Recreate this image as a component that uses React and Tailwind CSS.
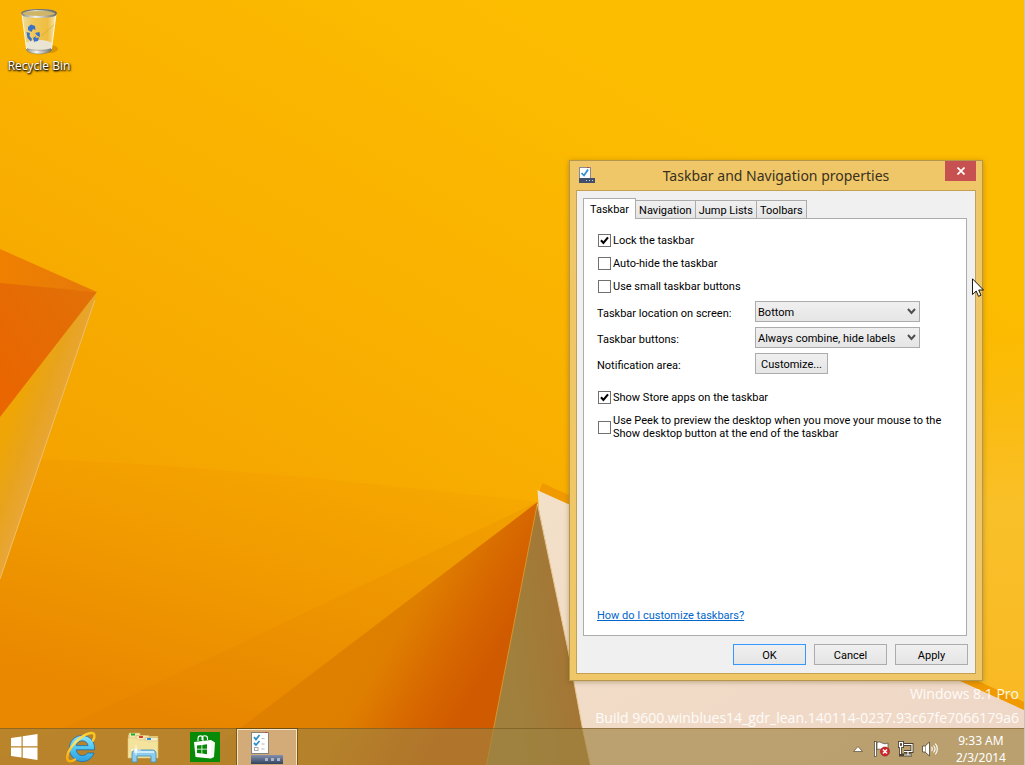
import React, { useState } from 'react';
import clsx from 'clsx';

const TABS = ['Taskbar', 'Navigation', 'Jump Lists', 'Toolbars'];

function Wallpaper() {
  return (
    <svg
      className="absolute inset-0 h-full w-full"
      viewBox="0 0 1025 765"
      preserveAspectRatio="none"
      aria-hidden="true"
    >
      <defs>
        <linearGradient id="sky" gradientUnits="userSpaceOnUse" x1="150" y1="600" x2="500" y2="0">
          <stop offset="0" stopColor="#f3a000" />
          <stop offset="0.5" stopColor="#f9b000" />
          <stop offset="1" stopColor="#fcbc00" />
        </linearGradient>
        <linearGradient id="rightSide" gradientUnits="userSpaceOnUse" x1="0" y1="330" x2="0" y2="690">
          <stop offset="0" stopColor="#f9be20" stopOpacity="0" />
          <stop offset="0.5" stopColor="#f9c02a" />
          <stop offset="1" stopColor="#f8b924" />
        </linearGradient>
        <linearGradient id="flapTop" x1="0" y1="0" x2="1" y2="0">
          <stop offset="0" stopColor="#ef8000" />
          <stop offset="1" stopColor="#e67a0a" />
        </linearGradient>
        <linearGradient id="flapLow" x1="0.9" y1="0" x2="0.1" y2="0.8">
          <stop offset="0" stopColor="#e27008" />
          <stop offset="1" stopColor="#e96600" />
        </linearGradient>
        <linearGradient id="fold" gradientUnits="userSpaceOnUse" x1="10" y1="420" x2="64" y2="440">
          <stop offset="0" stopColor="#eea505" />
          <stop offset="0.4" stopColor="#e8a31c" />
          <stop offset="1" stopColor="#e8a848" />
        </linearGradient>
        <linearGradient id="lower" gradientUnits="userSpaceOnUse" x1="330" y1="450" x2="240" y2="740">
          <stop offset="0" stopColor="#f6a700" />
          <stop offset="0.5" stopColor="#f09900" />
          <stop offset="1" stopColor="#ea8800" />
        </linearGradient>
        <linearGradient id="ray" gradientUnits="userSpaceOnUse" x1="350" y1="630" x2="470" y2="700">
          <stop offset="0" stopColor="#e08000" />
          <stop offset="0.3" stopColor="#df7f00" />
          <stop offset="0.7" stopColor="#d76700" />
          <stop offset="1" stopColor="#d05a00" />
        </linearGradient>
        <linearGradient id="olive" gradientUnits="userSpaceOnUse" x1="510" y1="650" x2="580" y2="640">
          <stop offset="0" stopColor="#a0803c" />
          <stop offset="1" stopColor="#a57434" />
        </linearGradient>
        <linearGradient id="cream" x1="0" y1="0" x2="1" y2="1">
          <stop offset="0" stopColor="#f3e0c8" />
          <stop offset="1" stopColor="#eed6c6" />
        </linearGradient>
      </defs>
      <rect width="1025" height="765" fill="url(#sky)" />
      <rect x="700" y="330" width="325" height="380" fill="url(#rightSide)" />
      <path d="M0 458 C 160 462 330 478 538 502 L490 765 L0 765 Z" fill="url(#lower)" />
      <path d="M538 502 L0 758 L0 765 L490 765 Z" fill="#e07800" opacity="0.15" />
      <path d="M538 502 L192 765 L490 765 Z" fill="url(#ray)" />
      <path d="M0 416 L96 292 L94 305 L0 580 Z" fill="url(#fold)" />
      <path d="M95 300 L0 579" stroke="#f3c877" strokeWidth="1" fill="none" opacity="0.7" />
      <path d="M0 249 L97 292 L0 284 Z" fill="url(#flapTop)" />
      <path d="M0 283 L97 292 L0 417 Z" fill="url(#flapLow)" />
      <path d="M538 490 L1025 708 L1025 765 L560 765 Z" fill="url(#cream)" />
      <path d="M543 483 L1025 702 L1025 710 L540 491 Z" fill="#f09a00" />
      <path d="M538 503 L487 765 L591 765 L583 728 L569 652 Z" fill="url(#olive)" />
      <path d="M538 503 L487 765" stroke="#d9952c" strokeWidth="1" fill="none" />
      <path d="M538 504 L569 652 L583 728 L591 765" stroke="#e9c792" strokeWidth="1" fill="none" />
    </svg>
  );
}

function RecycleBinIcon() {
  return (
    <svg className="h-12 w-12" viewBox="0 0 48 48" aria-hidden="true">
      <defs>
        <linearGradient id="glass" x1="0" x2="1">
          <stop offset="0" stopColor="#e8dfae" stopOpacity="0.95" />
          <stop offset="0.35" stopColor="#eecb6c" stopOpacity="0.8" />
          <stop offset="0.75" stopColor="#edbf4c" stopOpacity="0.85" />
          <stop offset="1" stopColor="#f6ecc4" stopOpacity="0.95" />
        </linearGradient>
        <linearGradient id="chrome" x1="0" x2="1">
          <stop offset="0" stopColor="#8c8c84" />
          <stop offset="0.4" stopColor="#f4f4f0" />
          <stop offset="0.7" stopColor="#b0b0aa" />
          <stop offset="1" stopColor="#6f6f68" />
        </linearGradient>
      </defs>
      <ellipse cx="35" cy="41" rx="8" ry="4" fill="#b87800" opacity="0.5" />
      <path d="M7 6 L12 42 C16 46 32 46 36 42 L41 6 Z" fill="url(#glass)" />
      <path d="M11 35 C16 31 32 31 37 35 L36 42 C32 45 16 45 12 42 Z" fill="#e9e9e2" opacity="0.9" />
      <path d="M26 28 L40 16" stroke="#d5a32c" strokeWidth="1" opacity="0.6" />
      <path d="M11 40 C16 43 32 43 37 40 L36 43 C31 47 17 47 12 43 Z" fill="url(#chrome)" stroke="#66665f" strokeWidth="0.400" />
      <path d="M7 6 L11.500 41 M41 6 L36.500 41" stroke="#fffbe6" strokeWidth="1" fill="none" />
      <ellipse cx="24" cy="5.500" rx="17" ry="3.500" fill="#d0b566" stroke="url(#chrome)" strokeWidth="1.800" />
      <path d="M6.500 5 C9 0.500 39 0.500 41.500 5" stroke="#66665c" strokeWidth="1" fill="none" />
      <g fill="#3972c8">
        <path d="M13 19 L16 16.500 L20 18 L20.500 22 L18 21 L16.500 24 L13 22 Z" />
        <path d="M11.500 24 L15 25 L14.500 28 L17 31 L16 33.500 L12.500 30 Z" />
        <path d="M18 30 L21 28 L20.500 30 L24 29.500 L23 33 L20 33.500 L19.500 34.500 Z" />
        <path d="M20 25 L24.500 24 L25 29 L22 27.500 Z" />
      </g>
    </svg>
  );
}

function WindowsLogo() {
  return (
    <svg className="h-[26px] w-[27px]" viewBox="0 0 27 26" fill="#fff" aria-hidden="true">
      <path d="M0 4 L10.500 2.500 V12.300 H0 Z" />
      <path d="M11.700 2.300 L26.500 0 V12.300 H11.700 Z" />
      <path d="M0 13.500 H10.500 V23.500 L0 22 Z" />
      <path d="M11.700 13.500 H26.500 V26 L11.700 23.700 Z" />
    </svg>
  );
}

function InternetExplorerIcon() {
  return (
    <svg className="h-8 w-8" viewBox="0 0 32 32" aria-hidden="true">
      <defs>
        <linearGradient id="ieBlue" x1="0" y1="0" x2="0" y2="1">
          <stop offset="0" stopColor="#8fe6fb" />
          <stop offset="0.5" stopColor="#4fc5f2" />
          <stop offset="1" stopColor="#2f9fe0" />
        </linearGradient>
        <linearGradient id="ieRing" x1="0" y1="1" x2="1" y2="0">
          <stop offset="0" stopColor="#f6a800" />
          <stop offset="0.5" stopColor="#ffe66b" />
          <stop offset="1" stopColor="#f9c21b" />
        </linearGradient>
      </defs>
      <path
        d="M29.500 18.800 H11.200 C11.500 22.200 14 24.600 17.300 24.600 C19.500 24.600 21.300 23.600 22.300 22 H29 C27.200 27.200 22.800 30.600 17.300 30.600 C10 30.600 4.300 24.800 4.300 17.500 C4.300 10.200 10 4.500 17.300 4.500 C24.500 4.500 30.300 10.300 29.500 18.800 Z M11.300 14.600 H23 C22.600 11.800 20.300 9.800 17.200 9.800 C14.100 9.800 11.800 11.800 11.300 14.600 Z"
        fill="url(#ieBlue)"
        stroke="#1c6fae"
        strokeWidth="0.800"
      />
      <path
        d="M28 9.500 C30.500 5 30 1.700 26 2 C20 2.600 11 9 6 16.500 C1.500 23 0.800 29.500 4.500 30.200 C6.200 30.600 8 29.800 10 28.500"
        fill="none"
        stroke="url(#ieRing)"
        strokeWidth="2.400"
        strokeLinecap="round"
      />
    </svg>
  );
}

function ExplorerIcon() {
  return (
    <svg className="h-8 w-8" viewBox="0 0 32 32" aria-hidden="true">
      <path d="M1 4 H2 V2 H13 V4 H19 V5 H31 V27 H1 Z" fill="#e2c878" />
      <path d="M2 2 H13 V8 H2 Z" fill="#f4e6b0" stroke="#d0b460" strokeWidth="0.600" />
      <path d="M9 4.500 H22 V10 H9 Z" fill="#f4e6b0" stroke="#d0b460" strokeWidth="0.600" />
      <path d="M18 6.500 H31 V12 H18 Z" fill="#f7edc4" stroke="#d0b460" strokeWidth="0.600" />
      <rect x="4" y="2.500" width="4" height="2" fill="#16b02c" />
      <rect x="12" y="5" width="4" height="2" fill="#d8402c" />
      <rect x="20" y="7" width="4" height="2" fill="#2e8de0" />
      <path d="M1 7 H9 L11 9 H18 L20 10 H31 V27 H1 Z" fill="#f4e39c" stroke="#dcc47a" strokeWidth="0.600" />
      <path
        d="M5 31 V23 C5 20 6.500 19 9 19 H25 C27.500 19 29 20 29 23 V31 H24 V25 H10 V31 Z"
        fill="#8ccdec"
        stroke="#4a94bf"
        strokeWidth="0.900"
      />
      <path d="M7 21 H27" stroke="#dff4fd" strokeWidth="1.600" />
      <path d="M9 14 V24 M4 19 H14" stroke="#fff" strokeWidth="0.900" opacity="0.9" />
      <circle cx="9" cy="19" r="1.600" fill="#fff" />
    </svg>
  );
}

function StoreIcon() {
  return (
    <svg className="h-[30px] w-[30px]" viewBox="0 0 30 30" aria-hidden="true">
      <rect width="30" height="30" fill="#078a07" />
      <path d="M8 9 V6.500 C8 3 13 3 13 6.500 V9 M12 8 V6 C12 3 17.500 3 17.500 6 V8" fill="none" stroke="#fff" strokeWidth="1.100" />
      <path d="M4 10 L21 8 L21 26.500 L5.500 25 Z" fill="#fff" />
      <path d="M21 8 L25 10.500 L24 25 L21 26.500 Z" fill="#f2faf2" />
      <g fill="#078a07">
        <path d="M7 13.500 L11.500 13 V16.700 H7 Z" />
        <path d="M12.300 12.900 L17 12.200 V16.700 H12.300 Z" />
        <path d="M7 17.500 H11.500 V21.500 L7 21 Z" />
        <path d="M12.300 17.500 H17 V22.200 L12.300 21.600 Z" />
      </g>
    </svg>
  );
}

function TaskbarSettingsIcon() {
  return (
    <svg className="h-8 w-8" viewBox="0 0 32 32" aria-hidden="true">
      <defs>
        <linearGradient id="barBlue" x1="0" y1="0" x2="0" y2="1">
          <stop offset="0" stopColor="#8290ac" />
          <stop offset="1" stopColor="#33425f" />
        </linearGradient>
      </defs>
      <rect x="0.500" y="0.500" width="17" height="21" fill="#fdfdfd" stroke="#85827c" />
      <rect x="14" y="0" width="2" height="1" fill="#d33" />
      <path d="M3 5 L5 7.500 L8.500 3 M3 11 L5 13 L8.500 9" stroke="#2d8fc9" strokeWidth="1.800" fill="none" />
      <path d="M10.500 6.500 H13.500 M10.500 12 H13.500 M10.500 17 H13.500" stroke="#bbb" strokeWidth="1" />
      <rect x="3.500" y="15.500" width="3.500" height="3" fill="none" stroke="#aaa" />
      <rect x="0" y="23" width="32" height="9" fill="url(#barBlue)" />
      <rect x="14" y="26" width="3" height="3" fill="#aab6c8" />
      <rect x="20" y="26" width="3" height="3" fill="#aab6c8" />
      <rect x="26" y="26" width="3" height="3" fill="#aab6c8" />
    </svg>
  );
}

function DialogIcon() {
  return (
    <svg className="h-4 w-4" viewBox="0 0 16 16" aria-hidden="true">
      <rect x="0.500" y="0.500" width="11" height="11" fill="#fff" stroke="#8a8a90" />
      <rect x="8" y="0" width="2" height="1" fill="#d33" />
      <path d="M2.500 6 L5 8.500 L9 2.500" stroke="#2a8fcc" strokeWidth="1.700" fill="none" />
      <rect x="0" y="11" width="16" height="5" fill="#43506b" />
      <rect x="7" y="13" width="1" height="1" fill="#c8d2e2" />
      <rect x="10" y="13" width="1" height="1" fill="#c8d2e2" />
      <rect x="13" y="13" width="1" height="1" fill="#c8d2e2" />
    </svg>
  );
}

function FlagIcon() {
  return (
    <svg className="h-4 w-4" viewBox="0 0 16 16" aria-hidden="true">
      <rect x="0.500" y="0.500" width="2" height="15" fill="#fff" stroke="#4c4231" strokeWidth="0.700" />
      <path d="M3 1.500 C5 0.500 7 1 8 2 C10 3 12 3 14 2 V9 C11 10 9 9.500 7.500 8.500 C6 8 4.500 8 3 8.500 Z" fill="#fff" stroke="#4c4231" strokeWidth="0.700" />
      <circle cx="11" cy="10.500" r="4.500" fill="#d8252c" stroke="#8e1a1d" strokeWidth="0.600" />
      <path d="M9 8.500 L13 12.500 M13 8.500 L9 12.500" stroke="#fff" strokeWidth="1.500" />
    </svg>
  );
}

function NetworkIcon() {
  return (
    <svg className="h-4 w-4" viewBox="0 0 16 16" fill="none" aria-hidden="true">
      <g stroke="#4c4231" strokeWidth="3">
        <path d="M6 3.500 H14 V10.500 H6 M10 11 V14 M5 14 H14 M2.500 6 V14 H5" />
        <rect x="1.500" y="1.500" width="3" height="4" />
      </g>
      <g stroke="#fff" strokeWidth="1.200">
        <path d="M6 3.500 H14 V10.500 H6 M10 11 V14 M6 14 H13.500 M2.500 6 V13" />
        <rect x="1.500" y="1.500" width="3" height="4" />
      </g>
    </svg>
  );
}

function SpeakerIcon() {
  return (
    <svg className="h-4 w-4" viewBox="0 0 16 16" fill="none" aria-hidden="true">
      <path d="M0.500 5 H3 L7.500 1 V15 L3 11 H0.500 Z" fill="#fff" stroke="#4c4231" strokeWidth="0.800" />
      <path d="M3.500 5 V11" stroke="#8f7f5e" strokeWidth="0.700" />
      <path d="M9.500 6 C10.500 7 10.500 9 9.500 10 M11.500 4.500 C13.300 6.500 13.300 9.500 11.500 11.500 M13.300 2.700 C16 5.500 16 10.500 13.300 13.300" stroke="#fff" strokeWidth="1.100" />
    </svg>
  );
}

function CheckField({ id, label, checked, onChange }) {
  return (
    <div className="flex items-center gap-[2px] py-[5px] pl-px">
      <span className="relative flex shrink-0">
        <input
          id={id}
          type="checkbox"
          checked={checked}
          onChange={onChange}
          className="peer h-[13px] w-[13px] appearance-none border border-[#707070] bg-white"
        />
        <svg
          className="pointer-events-none absolute inset-0 hidden h-[13px] w-[13px] peer-checked:block"
          viewBox="0 0 13 13"
          aria-hidden="true"
        >
          <path d="M3 6.300 L5.400 9 L10 3.300" stroke="#000" strokeWidth="2.100" fill="none" />
        </svg>
      </span>
      <label htmlFor={id}>{label}</label>
    </div>
  );
}

function SelectField({ id, label, options }) {
  return (
    <div className="flex items-center">
      <label htmlFor={id} className="w-[158px] pt-[3px]">
        {label}
      </label>
      <div className="relative w-[165px]">
        <select
          id={id}
          className="block h-[21px] w-full appearance-none border border-[#acacac] bg-linear-to-b from-[#f0f0f0] to-[#e5e5e5] pl-[2px] pt-px"
        >
          {options.map((option) => (
            <option key={option}>{option}</option>
          ))}
        </select>
        <svg
          className="pointer-events-none absolute right-1 top-[6px] h-[9px] w-[9px]"
          viewBox="0 0 9 9"
          aria-hidden="true"
        >
          <path d="M1 2 L4.500 6 L8 2" stroke="#505050" strokeWidth="2" fill="none" />
        </svg>
      </div>
    </div>
  );
}

function PushButton({ children, primary }) {
  return (
    <button
      type="button"
      className={clsx(
        'h-[21px] w-[73px] border bg-linear-to-b from-[#f0f0f0] to-[#e5e5e5] pt-px text-center',
        primary ? 'border-[#3399ff]' : 'border-[#acacac]'
      )}
    >
      {children}
    </button>
  );
}

function PropertiesDialog() {
  const [activeTab, setActiveTab] = useState('Taskbar');
  const [settings, setSettings] = useState({
    lock: true,
    autoHide: false,
    smallButtons: false,
    storeApps: true,
    peek: false,
  });

  const toggle = (key) => () => setSettings((prev) => ({ ...prev, [key]: !prev[key] }));

  return (
    <section
      aria-label="Taskbar and Navigation properties"
      className="absolute left-[569px] top-[160px] w-[414px] border border-[#b6964a] bg-[#efc768] px-[6px] pb-[6px] shadow-[0_1px_5px_rgba(90,60,0,0.35)]"
    >
      <header className="flex h-[29px] items-start">
        <div className="pl-[3px] pt-[6px]">
          <DialogIcon />
        </div>
        <h1 className="flex-1 pl-3 text-center font-['Noto_Sans','Open_Sans',sans-serif] text-[14px] leading-[29px] text-[#3a3020]">
          Taskbar and Navigation properties
        </h1>
        <button type="button" aria-label="Close" className="flex h-5 w-[31px] items-center justify-center bg-[#c75050]">
          <svg className="h-2 w-2" viewBox="0 0 8 8" aria-hidden="true">
            <path d="M0.500 0.500 L7.500 7.500 M7.500 0.500 L0.500 7.500" stroke="#fff" strokeWidth="1.700" />
          </svg>
        </button>
      </header>

      <div className="border border-[#c3a052] bg-[#f0f0f0] pb-[8px] pl-[6px] pr-[7px] pt-[7px] font-[Roboto,'Noto_Sans',sans-serif] text-[11px] leading-[13px] text-black">
        <div role="tablist" className="flex items-end">
          {TABS.map((tab) => (
            <button
              key={tab}
              type="button"
              role="tab"
              aria-selected={activeTab === tab}
              onClick={() => setActiveTab(tab)}
              className={clsx(
                'border border-b-0 border-[#acacac] text-center',
                activeTab === tab
                  ? 'relative -mb-px h-[21px] bg-white px-[6px]'
                  : 'h-[18px] border-l-0 bg-linear-to-b from-[#f0f0f0] to-[#e5e5e5] px-[3px] pt-px'
              )}
            >
              {tab}
            </button>
          ))}
        </div>

        <div role="tabpanel" className="mr-px border border-[#acacac] bg-white px-[13px] pb-[13px] pt-[10px]">
          <CheckField id="lock" label="Lock the taskbar" checked={settings.lock} onChange={toggle('lock')} />
          <CheckField id="auto-hide" label="Auto-hide the taskbar" checked={settings.autoHide} onChange={toggle('autoHide')} />
          <CheckField
            id="small-buttons"
            label="Use small taskbar buttons"
            checked={settings.smallButtons}
            onChange={toggle('smallButtons')}
          />
          <div className="mb-3 mt-[3px] space-y-[5px]">
            <SelectField id="location" label="Taskbar location on screen:" options={['Bottom', 'Left', 'Right', 'Top']} />
            <SelectField
              id="combine"
              label="Taskbar buttons:"
              options={['Always combine, hide labels', 'Combine when taskbar is full', 'Never combine']}
            />
            <div className="flex items-center">
              <span className="w-[158px] pt-[3px]">Notification area:</span>
              <PushButton>Customize...</PushButton>
            </div>
          </div>
          <CheckField
            id="store-apps"
            label="Show Store apps on the taskbar"
            checked={settings.storeApps}
            onChange={toggle('storeApps')}
          />
          <CheckField
            id="peek"
            label="Use Peek to preview the desktop when you move your mouse to the Show desktop button at the end of the taskbar"
            checked={settings.peek}
            onChange={toggle('peek')}
          />
          <div className="pt-[164px]">
            <a href="#help" className="block text-[#0066cc] underline">
              How do I customize taskbars?
            </a>
          </div>
        </div>

        <footer className="flex justify-end gap-2 pt-[8px]">
          <PushButton primary>OK</PushButton>
          <PushButton>Cancel</PushButton>
          <PushButton>Apply</PushButton>
        </footer>
      </div>
    </section>
  );
}

function Cursor() {
  return (
    <svg className="pointer-events-none absolute left-[972px] top-[278px] h-[19px] w-3" viewBox="0 0 12 19" aria-hidden="true">
      <path
        d="M0.500 0.800 V16.500 L4.200 13 L6.500 18.300 L9 17.200 L6.700 12 H11.500 Z"
        fill="#fff"
        stroke="#000"
        strokeWidth="0.900"
      />
    </svg>
  );
}

function TaskButton({ label, active, children }) {
  return (
    <button
      type="button"
      aria-label={label}
      className={clsx(
        'flex w-[60px] items-center justify-center',
        active && 'border border-b-0 border-[#f5e6c6] bg-[#d9b58c]/80 shadow-[0_0_0_1px_rgba(90,60,10,0.6)]'
      )}
    >
      {children}
    </button>
  );
}

function Taskbar() {
  return (
    <nav className="relative flex h-[37px] items-stretch justify-between border-t border-[#6b4c14]/50 bg-[#9e8241]/65">
      <div className="flex items-stretch gap-[2px]">
        <button type="button" aria-label="Start" className="flex w-[49px] items-center justify-center">
          <WindowsLogo />
        </button>
        <TaskButton label="Internet Explorer">
          <InternetExplorerIcon />
        </TaskButton>
        <TaskButton label="File Explorer">
          <ExplorerIcon />
        </TaskButton>
        <TaskButton label="Store">
          <StoreIcon />
        </TaskButton>
        <TaskButton label="Taskbar and Navigation properties" active>
          <TaskbarSettingsIcon />
        </TaskButton>
      </div>

      <div className="flex items-center gap-2 pr-[18px] pt-[3px] text-white">
        <button type="button" aria-label="Show hidden icons" className="flex h-4 w-4 items-center justify-center">
          <svg className="h-[6px] w-[10px]" viewBox="0 0 10 6" aria-hidden="true">
            <path d="M5 0.500 L9.500 5.500 H0.500 Z" fill="#fff" stroke="#5c4c30" strokeWidth="0.700" />
          </svg>
        </button>
        <button type="button" aria-label="Action Center">
          <FlagIcon />
        </button>
        <button type="button" aria-label="Network">
          <NetworkIcon />
        </button>
        <button type="button" aria-label="Volume">
          <SpeakerIcon />
        </button>
        <time className="ml-[10px] text-center font-['Noto_Sans','Open_Sans',sans-serif] text-[12px] leading-[17px]">
          <span className="block">9:33 AM</span>
          <span className="block">2/3/2014</span>
        </time>
      </div>
    </nav>
  );
}

export default function App() {
  return (
    <div className="relative flex min-h-screen flex-col overflow-hidden border-r border-[#c8c4bc] bg-[#fab400] font-['Open_Sans','Noto_Sans',sans-serif]">
      <Wallpaper />
      <main className="relative flex flex-1 flex-col items-start justify-between">
        <button type="button" className="ml-px mt-2 flex w-[76px] flex-col items-center">
          <RecycleBinIcon />
          <span className="text-[12px] leading-5 text-white [text-shadow:0_1px_2px_#000,1px_1px_2px_#000]">Recycle Bin</span>
        </button>
        <div className="-mb-[2px] self-end pr-[5px] text-right text-[14px] leading-6 text-white/90">
          <p>Windows 8.1 Pro</p>
          <p>Build 9600.winblues14_gdr_lean.140114-0237.93c67fe7066179a6</p>
        </div>
      </main>
      <PropertiesDialog />
      <Taskbar />
      <Cursor />
    </div>
  );
}
